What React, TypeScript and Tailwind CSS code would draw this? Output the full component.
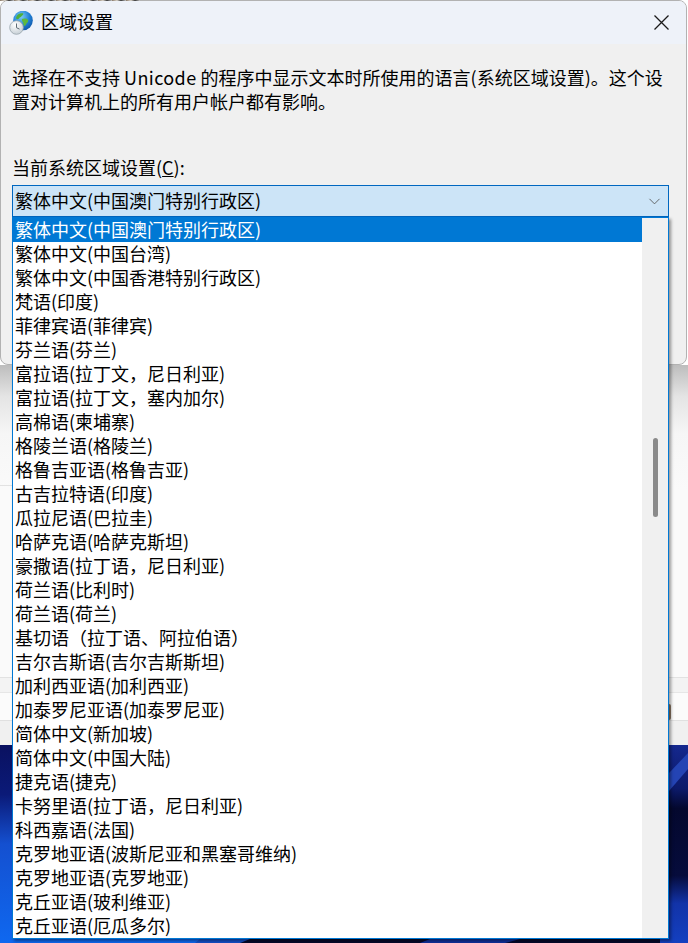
import { ChevronDown } from 'lucide-react';

const items = [
  '繁体中文(中国澳门特别行政区)',
  '繁体中文(中国台湾)',
  '繁体中文(中国香港特别行政区)',
  '梵语(印度)',
  '菲律宾语(菲律宾)',
  '芬兰语(芬兰)',
  '富拉语(拉丁文，尼日利亚)',
  '富拉语(拉丁文，塞内加尔)',
  '高棉语(柬埔寨)',
  '格陵兰语(格陵兰)',
  '格鲁吉亚语(格鲁吉亚)',
  '古吉拉特语(印度)',
  '瓜拉尼语(巴拉圭)',
  '哈萨克语(哈萨克斯坦)',
  '豪撒语(拉丁语，尼日利亚)',
  '荷兰语(比利时)',
  '荷兰语(荷兰)',
  '基切语（拉丁语、阿拉伯语）',
  '吉尔吉斯语(吉尔吉斯斯坦)',
  '加利西亚语(加利西亚)',
  '加泰罗尼亚语(加泰罗尼亚)',
  '简体中文(新加坡)',
  '简体中文(中国大陆)',
  '捷克语(捷克)',
  '卡努里语(拉丁语，尼日利亚)',
  '科西嘉语(法国)',
  '克罗地亚语(波斯尼亚和黑塞哥维纳)',
  '克罗地亚语(克罗地亚)',
  '克丘亚语(玻利维亚)',
  '克丘亚语(厄瓜多尔)',
];

function GlobeIcon() {
  return (
    <svg width="26" height="24" viewBox="0 0 26 24" className="shrink-0">
      <defs>
        <radialGradient id="sea" cx="0.4" cy="0.3" r="0.8">
          <stop offset="0" stopColor="#7fcdf5" />
          <stop offset="0.55" stopColor="#1f7fd6" />
          <stop offset="1" stopColor="#0d4f9e" />
        </radialGradient>
        <radialGradient id="dial" cx="0.4" cy="0.3" r="0.9">
          <stop offset="0" stopColor="#ffffff" />
          <stop offset="1" stopColor="#b9c4cc" />
        </radialGradient>
      </defs>
      <circle cx="14" cy="9.500" r="9.800" fill="url(#sea)" />
      <path d="M9 3.500c1.500-1 3.500-1.500 5-1.200.6.800.2 1.700-.8 2.200-.8.400-.8 1.500-1.900 1.800-1.100.3-1.100 1.500-2.300 1.800-.8.200-1.500-.2-2-.9.400-1.500 1-2.800 2-3.700z" fill="#4fae3c" />
      <path d="M13 8c2.200-1 5-.6 6 .9.600 1.100-.2 2.300-1.200 3-.6 1.400-1.500 2.600-2.700 3.200-.7-1-.6-2.400-1-3.500-.7-1-1.600-2.700-1.100-3.600z" fill="#5cb83f" />
      <circle cx="7.500" cy="16.500" r="6.800" fill="url(#dial)" stroke="#98a4ac" strokeWidth="0.8" />
      <path d="M7.500 12.500v4.200l3 1.400" fill="none" stroke="#5d6a73" strokeWidth="1" />
    </svg>
  );
}

function Wallpaper() {
  return (
    <svg width="688" height="198" viewBox="0 0 688 198" className="block shrink-0">
      <defs>
        <linearGradient id="leftBlue" x1="0" y1="0" x2="0" y2="1">
          <stop offset="0" stopColor="#0a1160" />
          <stop offset="0.25" stopColor="#0b1a78" />
          <stop offset="0.5" stopColor="#1450d0" />
          <stop offset="1" stopColor="#0f68f0" />
        </linearGradient>
        <linearGradient id="rightBlue" x1="0" y1="0" x2="0" y2="1">
          <stop offset="0" stopColor="#15288e" />
          <stop offset="0.22" stopColor="#0c1a6a" />
          <stop offset="0.32" stopColor="#04082e" />
          <stop offset="0.66" stopColor="#060c3c" />
          <stop offset="0.8" stopColor="#1233a8" />
          <stop offset="1" stopColor="#1440c0" />
        </linearGradient>
      </defs>
      <rect width="688" height="198" fill="#04082a" />
      <rect width="200" height="198" fill="url(#leftBlue)" />
      <rect x="660" width="28" height="198" fill="url(#rightBlue)" />
      <path d="M669 28 L688 8 V24 L669 46Z" fill="#2444b4" />
      <path d="M200 194 H250 L240 198 H195Z" fill="#1450c8" />
      <path d="M430 194 H520 L505 198 H420Z" fill="#10309a" />
    </svg>
  );
}

export default function App() {
  return (
    <div className="relative w-[688px] h-[943px] overflow-hidden flex flex-col bg-white text-[18px] leading-[24px] text-black font-['Noto_Sans_CJK_SC','Noto_Sans',sans-serif]">
      <div className="w-[687px] h-[365px] shrink-0 rounded-lg border border-[#b2b2b2] bg-[#f0f0f0] overflow-hidden">
        <div className="h-[43px] bg-[#eef2f9] flex items-center pl-[8px] pr-[17px]">
          <GlobeIcon />
          <span className="ml-[6px] pb-[4px]">区域设置</span>
          <svg width="15" height="15" viewBox="0 0 15 15" className="ml-auto">
            <path d="M0.500 0.500L14.500 14.500M14.500 0.500L0.500 14.500" stroke="#1a1a1a" strokeWidth="1.300" fill="none" />
          </svg>
        </div>
        <div className="pl-[11px] pr-[17px] pt-[21px]">
          <p className="whitespace-nowrap">
            选择在不支持 <span className="tracking-[0.4px]">Unicode</span> 的程序中显示文本时所使用的语言(系统区域设置)。这个设
          </p>
          <p className="whitespace-nowrap">置对计算机上的所有用户帐户都有影响。</p>
          <p className="mt-[42px]">
            当前系统区域设置(<span className="underline">C</span>):
          </p>
          <div className="mt-[6px] w-[657px] h-[32px] border border-[#0067c0] bg-[#cce4f7] flex items-center pl-[2px] pr-[4px]">
            <span className="whitespace-nowrap pb-[2px]">繁体中文(中国澳门特别行政区)</span>
            <ChevronDown className="ml-auto w-[19px] h-[19px] text-[#555555]" strokeWidth={1.100} />
          </div>
        </div>
      </div>

      <div className="relative h-[312px] shrink-0 bg-[linear-gradient(180deg,#bdbdbd_0%,#e4e4e4_10%,#f6f6f6_22%,#fafafa_40%)]">
        <div className="absolute left-0 top-[120px] w-[12px] h-px bg-[#e2e2e2]"></div>
      </div>
      <div className="h-[15px] shrink-0 bg-[#f3f3f3] border-t border-[#e2e2e2]"></div>
      <div className="h-[28px] shrink-0 bg-[#fbfbfb] border-t border-[#e6e6e6]"></div>
      <div className="h-[25px] shrink-0 bg-[#f0f0f0] border-t border-[#e0e0e0]"></div>
      <Wallpaper />

      <div className="absolute left-0 top-0 w-[140px] h-px bg-[repeating-linear-gradient(90deg,#8a7a6a_0px,#d8d2c8_5px,#3a3a3a_9px,#c4c4c4_14px)]"></div>
      <div className="absolute left-[669px] top-[704px] w-[2px] h-[16px] rounded-r-full bg-[#8a7764]"></div>

      <div className="absolute left-[12px] top-[217px] w-[657px] h-[722px] border border-[#0078d4] bg-white flex shadow-[2px_2px_3px_rgba(0,0,0,0.4)]">
        <ul className="w-[629px] shrink-0">
          {items.map((item, index) => (
            <li
              key={item}
              className={`h-[24px] pl-[2px] leading-[22px] whitespace-nowrap ${
                index === 0 ? 'bg-[#0078d4] text-white' : 'text-black'
              }`}
            >
              {item}
            </li>
          ))}
        </ul>
        <div className="flex-1 bg-[#f0f0f0] pt-[220px]">
          <div className="mx-auto w-[5px] h-[79px] rounded-full bg-[#8a8a8a]"></div>
        </div>
      </div>
    </div>
  );
}
